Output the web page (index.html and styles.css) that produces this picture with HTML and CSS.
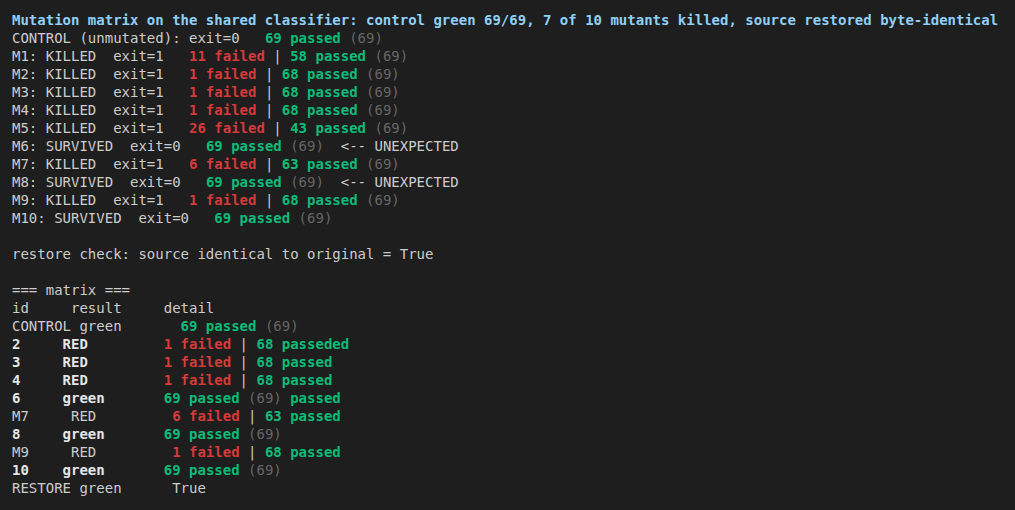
FILE: index.html
```html
<!DOCTYPE html>
<html>
<head>
<meta charset="utf-8">
<link rel="stylesheet" href="styles.css">
</head>
<body>
<main class="term">
<div class="ln head">Mutation matrix on the shared classifier: control green 69/69, 7 of 10 mutants killed, source restored byte-identical</div>
<div class="ln">CONTROL (unmutated): exit=0   <span class="ok">69 passed</span> <span class="dim">(69)</span></div>
<div class="ln">M1: KILLED  exit=1   <span class="bad">11 failed</span> | <span class="ok">58 passed</span> <span class="dim">(69)</span></div>
<div class="ln">M2: KILLED  exit=1   <span class="bad">1 failed</span> | <span class="ok">68 passed</span> <span class="dim">(69)</span></div>
<div class="ln">M3: KILLED  exit=1   <span class="bad">1 failed</span> | <span class="ok">68 passed</span> <span class="dim">(69)</span></div>
<div class="ln">M4: KILLED  exit=1   <span class="bad">1 failed</span> | <span class="ok">68 passed</span> <span class="dim">(69)</span></div>
<div class="ln">M5: KILLED  exit=1   <span class="bad">26 failed</span> | <span class="ok">43 passed</span> <span class="dim">(69)</span></div>
<div class="ln">M6: SURVIVED  exit=0   <span class="ok">69 passed</span> <span class="dim">(69)</span>  &lt;-- UNEXPECTED</div>
<div class="ln">M7: KILLED  exit=1   <span class="bad">6 failed</span> | <span class="ok">63 passed</span> <span class="dim">(69)</span></div>
<div class="ln">M8: SURVIVED  exit=0   <span class="ok">69 passed</span> <span class="dim">(69)</span>  &lt;-- UNEXPECTED</div>
<div class="ln">M9: KILLED  exit=1   <span class="bad">1 failed</span> | <span class="ok">68 passed</span> <span class="dim">(69)</span></div>
<div class="ln">M10: SURVIVED  exit=0   <span class="ok">69 passed</span> <span class="dim">(69)</span></div>
<div class="ln"> </div>
<div class="ln">restore check: source identical to original = True</div>
<div class="ln"> </div>
<div class="ln">=== matrix ===</div>
<div class="ln">id     result     detail</div>
<div class="ln">CONTROL green       <span class="ok">69 passed</span> <span class="dim">(69)</span></div>
<div class="ln"><b class="hi">2     RED</b>         <span class="bad">1 failed</span> | <span class="ok">68 passeded</span></div>
<div class="ln"><b class="hi">3     RED</b>         <span class="bad">1 failed</span> | <span class="ok">68 passed</span></div>
<div class="ln"><b class="hi">4     RED</b>         <span class="bad">1 failed</span> | <span class="ok">68 passed</span></div>
<div class="ln"><b class="hi">6     green</b>       <span class="ok">69 passed</span> <span class="dim">(69)</span> <span class="ok">passed</span></div>
<div class="ln">M7     RED         <span class="bad">6 failed</span> | <span class="ok">63 passed</span></div>
<div class="ln"><b class="hi">8     green</b>       <span class="ok">69 passed</span> <span class="dim">(69)</span></div>
<div class="ln">M9     RED         <span class="bad">1 failed</span> | <span class="ok">68 passed</span></div>
<div class="ln"><b class="hi">10    green</b>       <span class="ok">69 passed</span> <span class="dim">(69)</span></div>
<div class="ln">RESTORE green      True</div>
</main>
</body>
</html>
```

FILE: styles.css
```css
html, body {
  margin: 0;
  padding: 0;
  background: #1e1e1e;
}
.term {
  padding: 11px 12px;
  font-family: "DejaVu Sans Mono", monospace;
  font-size: 14px;
  line-height: 18px;
  color: #cccccc;
}
.ln {
  white-space: pre;
  height: 18px;
}
.head {
  color: #8fd0f6;
  font-weight: bold;
}
.ok {
  color: #0dbc79;
  font-weight: bold;
}
.bad {
  color: #d63a3a;
  font-weight: bold;
}
.dim {
  color: #666666;
}
.hi {
  color: #e5e5e5;
  font-weight: bold;
}
```
